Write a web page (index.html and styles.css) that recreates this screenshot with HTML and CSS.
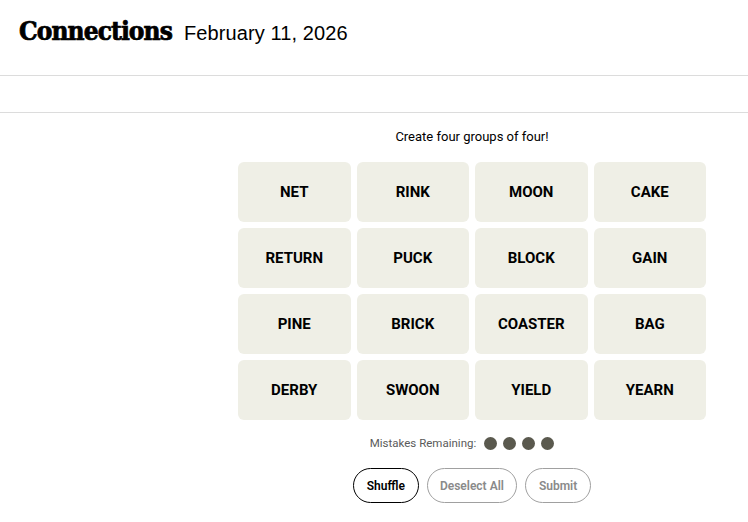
FILE: index.html
```html
<!DOCTYPE html>
<html lang="en">
<head>
<meta charset="utf-8">
<title>Connections</title>
<link rel="stylesheet" href="styles.css">
</head>
<body>
<header class="header">
  <h1 class="title">Connections</h1>
  <span class="date">February 11, 2026</span>
</header>
<div class="toolbar"></div>
<main class="game">
  <p class="prompt">Create four groups of four!</p>
  <div class="board">
    <div class="tile">NET</div>
    <div class="tile">RINK</div>
    <div class="tile">MOON</div>
    <div class="tile">CAKE</div>
    <div class="tile">RETURN</div>
    <div class="tile">PUCK</div>
    <div class="tile">BLOCK</div>
    <div class="tile">GAIN</div>
    <div class="tile">PINE</div>
    <div class="tile">BRICK</div>
    <div class="tile">COASTER</div>
    <div class="tile">BAG</div>
    <div class="tile">DERBY</div>
    <div class="tile">SWOON</div>
    <div class="tile">YIELD</div>
    <div class="tile">YEARN</div>
  </div>
  <div class="mistakes">
    <span class="mistakes-label">Mistakes Remaining:</span>
    <span class="dots"><span class="dot"></span><span class="dot"></span><span class="dot"></span><span class="dot"></span></span>
  </div>
  <div class="actions">
    <button class="btn btn-active">Shuffle</button>
    <button class="btn btn-disabled btn-deselect">Deselect All</button>
    <button class="btn btn-disabled">Submit</button>
  </div>
</main>
</body>
</html>
```
FILE: styles.css
```css
html, body {
  margin: 0;
  padding: 0;
  background: #fff;
  color: #000;
  font-family: Roboto, "Liberation Sans", sans-serif;
}
.header {
  height: 75px;
  display: flex;
  align-items: baseline;
  padding: 0 0 0 19px;
  border-bottom: 1px solid #dcdcdc;
  box-sizing: content-box;
}
.title {
  margin: 0;
  font-family: "DejaVu Serif Condensed", "DejaVu Serif", serif;
  font-weight: 900;
  font-size: 26px;
  line-height: 62px;
  letter-spacing: -0.9px;
  -webkit-text-stroke: 0.7px #000;
}
.date {
  margin-left: 12px;
  font-family: "Liberation Sans", Arial, sans-serif;
  font-size: 20px;
  letter-spacing: 0.1px;
}
.toolbar {
  height: 36px;
  border-bottom: 1px solid #dcdcdc;
}
.game {
  width: 468px;
  margin-left: 238px;
  display: flex;
  flex-direction: column;
  align-items: center;
}
.prompt {
  margin: 16px 0 0;
  font-size: 13px;
  line-height: 16px;
}
.board {
  margin-top: 17px;
  width: 468px;
  display: grid;
  grid-template-columns: repeat(4, 1fr);
  gap: 6px;
}
.tile {
  height: 60px;
  background: #efefe6;
  border-radius: 6px;
  display: flex;
  align-items: center;
  justify-content: center;
  font-weight: 700;
  font-size: 15px;
  color: #000;
}
.mistakes {
  margin-top: 15px;
  display: flex;
  align-items: center;
  gap: 8px;
  height: 16px;
}
.mistakes-label {
  font-size: 11.5px;
  color: #5a5a5a;
  margin-left: -20px;
}
.dots {
  display: flex;
  gap: 6px;
}
.dot {
  width: 13px;
  height: 13px;
  border-radius: 50%;
  background: #5a594e;
}
.actions {
  margin-top: 17px;
  display: flex;
  gap: 8px;
}
.btn {
  height: 35px;
  border-radius: 18px;
  background: #fff;
  font-family: Roboto, "Liberation Sans", sans-serif;
  font-weight: 600;
  font-size: 12px;
  padding: 0 13px;
}
.btn-deselect {
  padding: 0 12px;
}
.btn-active {
  border: 1px solid #000;
  color: #000;
}
.btn-disabled {
  border: 1px solid #a0a0a0;
  color: #8a8a8a;
}
```
